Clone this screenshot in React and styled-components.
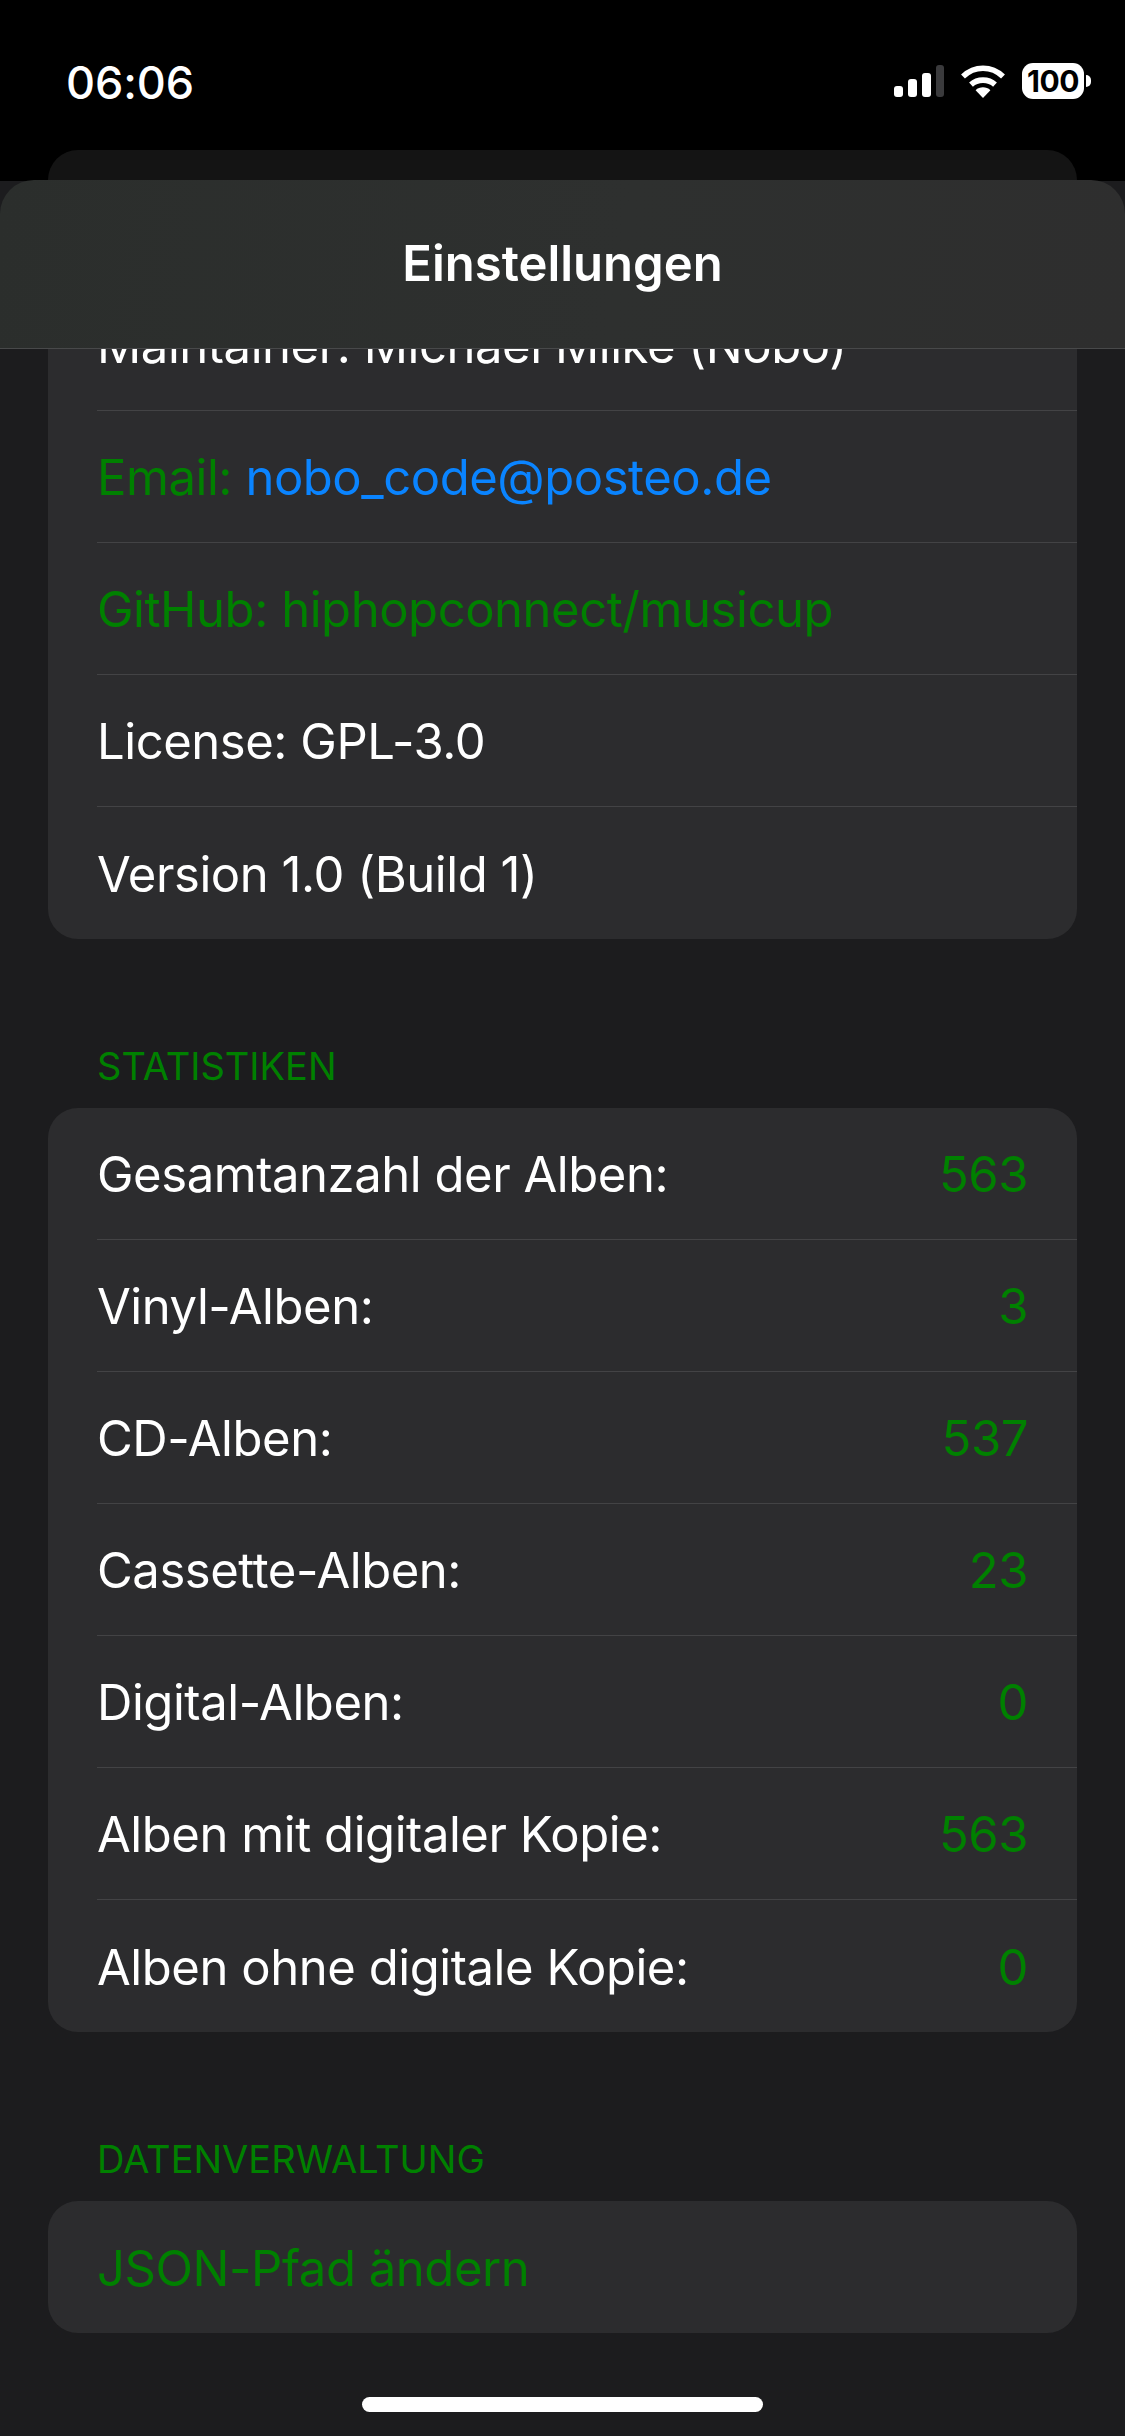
import styled, { createGlobalStyle } from "styled-components";

const GlobalStyle = createGlobalStyle`
  html, body {
    margin: 0;
    padding: 0;
    background: #1c1c1e;
  }
  body {
    font-family: Inter, "Liberation Sans", sans-serif;
    -webkit-font-smoothing: antialiased;
  }
`;

const GREEN = "#008000";

const Page = styled.div`
  position: relative;
  width: 1125px;
  height: 2436px;
  overflow: hidden;
  background: #1c1c1e;
`;

const Header = styled.header`
  position: absolute;
  top: 0;
  left: 0;
  right: 0;
  z-index: 2;
  background: linear-gradient(#000 0, #000 181px, transparent 181px);
`;

const StatusBar = styled.div`
  display: flex;
  align-items: center;
  justify-content: space-between;
  height: 82px;
  padding: 40px 34px 0 66px;
`;

const Time = styled.span`
  padding-top: 3px;
  font-size: 45px;
  font-weight: 500;
  line-height: 1;
  letter-spacing: -0.1px;
  color: #fff;
`;

const StatusIcons = styled.div`
  display: flex;
  align-items: center;
  gap: 16px;
`;

const Battery = styled.div`
  position: relative;
  display: flex;
  align-items: center;
  justify-content: center;
  width: 62px;
  height: 36px;
  margin-right: 7px;
  border-radius: 11px;
  background: #fff;
  color: #000;
  font-size: 30px;
  font-weight: 700;
  letter-spacing: -0.5px;

  &::after {
    content: "";
    position: absolute;
    top: 12px;
    right: -7px;
    width: 5px;
    height: 12px;
    border-radius: 0 6px 6px 0;
    background: #fff;
  }
`;

const PeekCard = styled.div`
  height: 30px;
  margin: 28px 48px 0;
  border-radius: 30px 30px 0 0;
  background: #141414;
`;

const NavBar = styled.div`
  display: flex;
  align-items: center;
  justify-content: center;
  box-sizing: border-box;
  height: 169px;
  padding-bottom: 1px;
  border-radius: 34px 34px 0 0;
  border-bottom: 1px solid #48494a;
  background: linear-gradient(100deg, #2b2e2c 0%, #2e302f 55%, #2e2e2e 100%);
`;

const NavTitle = styled.h1`
  margin: 0;
  font-size: 49px;
  font-weight: 600;
  color: #fff;
`;

const Content = styled.main`
  padding: 150px 48px 0;
`;

const Card = styled.section`
  border-radius: 30px;
  background: #2c2c2e;
  overflow: hidden;
`;

const Row = styled.div`
  display: flex;
  align-items: center;
  justify-content: space-between;
  box-sizing: border-box;
  height: ${(p) => p.$height || 132}px;
  margin-left: 49px;
  padding: 2px 49px 0 0;
  border-bottom: 1px solid #434345;
  font-size: 49px;
  letter-spacing: -0.45px;
  color: #fff;

  &:last-child {
    border-bottom: 0;
  }
`;

const Green = styled.span`
  color: ${GREEN};
`;

const Link = styled.span`
  color: #0a84ff;
`;

const SectionLabel = styled.h2`
  margin: ${(p) => p.$top}px 0 19px 49px;
  font-size: 38px;
  font-weight: 400;
  line-height: 46px;
  text-transform: uppercase;
  color: ${GREEN};
`;

const HomeBar = styled.div`
  position: absolute;
  left: 362px;
  bottom: 24px;
  width: 401px;
  height: 15px;
  border-radius: 8px;
  background: #fff;
`;

const SignalIcon = () => (
  <svg width="50" height="32" viewBox="0 0 50 32">
    <rect x="0" y="21" width="9" height="11" rx="3" fill="#fff" />
    <rect x="14" y="14" width="9" height="18" rx="3" fill="#fff" />
    <rect x="28" y="8" width="9" height="24" rx="3" fill="#fff" />
    <rect x="42" y="0" width="8" height="32" rx="3" fill="#3a3a3c" />
  </svg>
);

const WifiIcon = () => (
  <svg width="46" height="33" viewBox="0 0 46 33">
    <path d="M3 11.5C14.5 0.5 31.5 0.5 43 11.5" fill="none" stroke="#fff" strokeWidth="5.6" strokeLinecap="butt" />
    <path d="M11 19.6C17.5 13.6 28.5 13.6 35 19.6" fill="none" stroke="#fff" strokeWidth="5.6" strokeLinecap="butt" />
    <path d="M15.6 25.2C19.6 21.4 26.4 21.4 30.4 25.2L23 33Z" fill="#fff" />
  </svg>
);

const aboutRows = [
  { text: <Green>GitHub: hiphopconnect/musicup</Green> },
  { text: "License: GPL-3.0" },
  { text: "Version 1.0 (Build 1)" },
];

const stats = [
  ["Gesamtanzahl der Alben:", 563],
  ["Vinyl-Alben:", 3],
  ["CD-Alben:", 537],
  ["Cassette-Alben:", 23],
  ["Digital-Alben:", 0],
  ["Alben mit digitaler Kopie:", 563],
  ["Alben ohne digitale Kopie:", 0],
];

export default function App() {
  return (
    <>
      <GlobalStyle />
      <Page>
        <Header>
          <StatusBar>
            <Time>06:06</Time>
            <StatusIcons>
              <SignalIcon />
              <WifiIcon />
              <Battery>100</Battery>
            </StatusIcons>
          </StatusBar>
          <PeekCard />
          <NavBar>
            <NavTitle>Einstellungen</NavTitle>
          </NavBar>
        </Header>

        <Content>
          <Card>
            <Row $height={129} />
            <Row>Maintainer: Michael Milke (Nobo)</Row>
            <Row>
              <span>
                <Green>Email: </Green>
                <Link>nobo_code@posteo.de</Link>
              </span>
            </Row>
            {aboutRows.map((row, i) => (
              <Row key={i}>{row.text}</Row>
            ))}
          </Card>

          <SectionLabel $top={104}>Statistiken</SectionLabel>
          <Card>
            {stats.map(([label, value]) => (
              <Row key={label}>
                <span>{label}</span>
                <Green>{value}</Green>
              </Row>
            ))}
          </Card>

          <SectionLabel $top={104}>Datenverwaltung</SectionLabel>
          <Card>
            <Row>
              <Green>JSON-Pfad ändern</Green>
            </Row>
          </Card>
        </Content>

        <HomeBar />
      </Page>
    </>
  );
}
